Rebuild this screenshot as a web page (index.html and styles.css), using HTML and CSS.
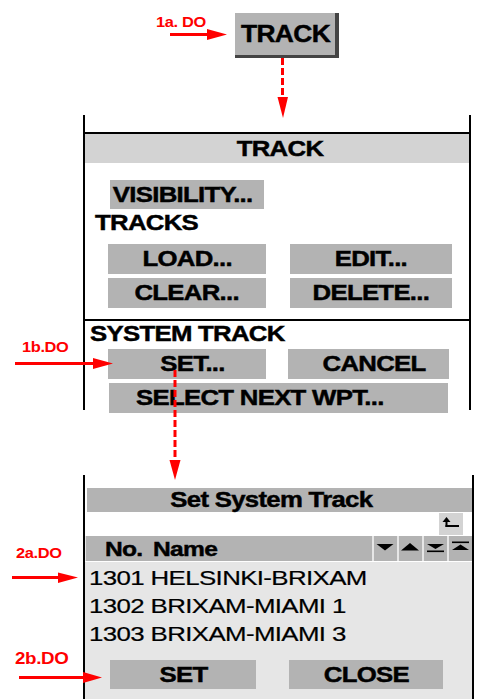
FILE: index.html
```html
<!DOCTYPE html>
<html>
<head>
<meta charset="utf-8">
<link rel="stylesheet" href="styles.css">
</head>
<body>
<div class="page">
  <div class="top">
    <div class="track-btn"><span class="t">TRACK</span></div>
  </div>

  <section class="panel p1">
    <div class="p1-head"><span class="t">TRACK</span></div>
    <div class="btn vis"><span class="t">VISIBILITY...</span></div>
    <div class="label lbl-tracks"><span class="t tl">TRACKS</span></div>
    <div class="btn-grid g1">
      <div class="btn"><span class="t">LOAD...</span></div>
      <div class="btn"><span class="t">EDIT...</span></div>
    </div>
    <div class="btn-grid g2">
      <div class="btn"><span class="t">CLEAR...</span></div>
      <div class="btn"><span class="t">DELETE...</span></div>
    </div>
    <div class="sep"></div>
    <div class="label lbl-sys"><span class="t tl">SYSTEM TRACK</span></div>
    <div class="btn-grid g3">
      <div class="btn shift"><span class="t">SET...</span></div>
      <div class="btn shift"><span class="t">CANCEL</span></div>
    </div>
    <div class="btn sel"><span class="t">SELECT NEXT WPT...</span></div>
  </section>

  <section class="panel p2">
    <div class="p2-title"><span class="t">Set System Track</span></div>
    <div class="toolbar">
      <div class="icon-btn">
        <svg width="24" height="22" viewBox="0 0 24 22">
          <polygon points="3.5,9 7.5,4 11.5,9" fill="#000"/>
          <rect x="6.5" y="8" width="2" height="6" fill="#000"/>
          <rect x="6.5" y="12" width="13.5" height="2" fill="#000"/>
        </svg>
      </div>
    </div>
    <div class="thead">
      <div class="th-main"><span class="t tl">No.</span><span class="t tl nm">Name</span></div>
      <div class="th-sort">
        <svg width="23" height="25" viewBox="0 0 23 25"><polygon points="2.5,8 19.5,8 11,14.5" fill="#000"/></svg>
      </div>
      <div class="th-sort">
        <svg width="23" height="25" viewBox="0 0 23 25"><polygon points="2,14.5 20,14.5 11,7" fill="#000"/></svg>
      </div>
      <div class="th-sort">
        <svg width="23" height="25" viewBox="0 0 23 25"><polygon points="3,8 20,8 11.5,13" fill="#000"/><rect x="3" y="14.5" width="17" height="1.6" fill="#000"/></svg>
      </div>
      <div class="th-sort">
        <svg width="23" height="25" viewBox="0 0 23 25"><rect x="3" y="5.5" width="17" height="1.6" fill="#000"/><polygon points="3,14 20,14 11.5,8.5" fill="#000"/></svg>
      </div>
    </div>
    <div class="list">
      <div class="row"><span class="t tl rt">1301 HELSINKI-BRIXAM</span></div>
      <div class="row"><span class="t tl rt">1302 BRIXAM-MIAMI 1</span></div>
      <div class="row"><span class="t tl rt">1303 BRIXAM-MIAMI 3</span></div>
      <div class="actions">
        <div class="btn"><span class="t">SET</span></div>
        <div class="btn"><span class="t">CLOSE</span></div>
      </div>
    </div>
  </section>

  <svg class="annot" width="477" height="699" viewBox="0 0 477 699">
    <g fill="#ff0000" stroke="none">
      <polygon points="207,29 227,34.5 207,40"/>
      <polygon points="93,358 113,363.5 93,369"/>
      <polygon points="58,572.5 78,577.5 58,583"/>
      <polygon points="83,672 102,677.5 83,683"/>
      <polygon points="277.5,97 288,97 283,118"/>
      <polygon points="169.5,460 180.5,460 175,480"/>
    </g>
    <g stroke="#ff0000" stroke-width="3" fill="none">
      <line x1="170" y1="34.5" x2="210" y2="34.5"/>
      <line x1="15" y1="363.5" x2="96" y2="363.5"/>
      <line x1="12" y1="577.5" x2="60" y2="577.5"/>
      <line x1="19" y1="677.5" x2="86" y2="677.5"/>
      <line x1="282.5" y1="58" x2="282.5" y2="99" stroke-dasharray="7 3"/>
      <line x1="175" y1="370" x2="175" y2="462" stroke-dasharray="7 3"/>
    </g>
  </svg>

  <span class="note n1a"><span class="t tl">1a. DO</span></span>
  <span class="note n1b"><span class="t tl">1b.DO</span></span>
  <span class="note n2a"><span class="t tl">2a.DO</span></span>
  <span class="note n2b"><span class="t tl">2b.DO</span></span>
</div>
</body>
</html>
```

FILE: styles.css
```css
* {
  box-sizing: border-box;
}

body {
  margin: 0;
  background: #ffffff;
  font-family: "Liberation Sans", Arial, Helvetica, sans-serif;
  color: #000000;
}

.page {
  position: relative;
  width: 477px;
  height: 699px;
  overflow: hidden;
}

.t {
  display: inline-block;
  white-space: nowrap;
  transform: scaleX(1.17);
  transform-origin: center;
  letter-spacing: -0.6px;
}

.tl {
  transform-origin: left center;
}

.track-btn,
.p1-head,
.btn,
.label,
.p2-title,
.th-main {
  -webkit-text-stroke: 0.45px #000000;
}

/* top TRACK button */
.top {
  height: 115px;
  padding-top: 13px;
  padding-left: 235px;
}

.track-btn {
  width: 104px;
  height: 45px;
  background: #b3b3b3;
  border-right: 4px solid #444444;
  border-bottom: 3px solid #444444;
  display: flex;
  align-items: center;
  justify-content: center;
  font-weight: bold;
  font-size: 24px;
}

.track-btn .t {
  transform: scaleX(1.1);
}

/* panels */
.panel {
  margin-left: 83px;
  border-left: 2px solid #000000;
  border-right: 2px solid #000000;
}

.p1 {
  width: 388px;
  height: 295px;
  padding-top: 17px;
}

.p1-head {
  height: 31px;
  border-top: 2px solid #000000;
  background: #d3d3d3;
  display: flex;
  align-items: center;
  justify-content: center;
  padding-left: 6px;
  font-weight: bold;
  font-size: 22px;
}

.btn {
  height: 30px;
  background: #b3b3b3;
  display: flex;
  align-items: center;
  justify-content: center;
  font-weight: bold;
  font-size: 22px;
}

.vis {
  margin-top: 17px;
  margin-left: 25px;
  width: 154px;
  height: 29px;
  padding-right: 8px;
}

.label {
  font-weight: bold;
  font-size: 22px;
  line-height: 22px;
  height: 22px;
}

.lbl-tracks {
  margin-top: 3px;
  padding-left: 10px;
}

.lbl-sys {
  margin-top: 2px;
  padding-left: 5px;
}

.btn-grid {
  display: grid;
  margin-left: 23px;
}

.g1,
.g2 {
  grid-template-columns: 158px 162px;
  column-gap: 24px;
}

.g1 {
  margin-top: 10px;
}

.g2 {
  margin-top: 4px;
}

.g3 {
  margin-top: 4px;
  grid-template-columns: 158px 161px;
  column-gap: 22px;
}

.shift {
  padding-left: 12px;
}

.sep {
  margin-top: 11px;
  border-top: 2px solid #000000;
}

.sel {
  margin-top: 4px;
  margin-left: 24px;
  width: 339px;
  padding-right: 38px;
}

/* second panel */
.p2 {
  margin-top: 65px;
  width: 391px;
  height: 230px;
  padding-top: 13px;
  display: flex;
  flex-direction: column;
}

.p2-title {
  margin-left: 2px;
  height: 24px;
  background: #b3b3b3;
  display: flex;
  align-items: center;
  justify-content: center;
  padding-right: 16px;
  font-weight: bold;
  font-size: 22px;
}

.toolbar {
  height: 23px;
  display: flex;
  justify-content: flex-end;
  padding-right: 9px;
}

.icon-btn {
  margin-top: 1px;
  width: 24px;
  height: 22px;
  background: #d3d3d3;
}

.icon-btn svg,
.th-sort svg {
  display: block;
}

.thead {
  margin-top: 1px;
  height: 25px;
  display: flex;
  gap: 2px;
  padding-left: 1px;
  background: #e6e6e6;
}

.th-main {
  flex: 1;
  background: #b3b3b3;
  display: flex;
  align-items: center;
  padding-left: 19px;
  font-weight: bold;
  font-size: 21px;
}

.th-main .nm {
  margin-left: 16px;
}

.th-sort {
  width: 23px;
  background: #b3b3b3;
}

.list {
  flex: 1;
  margin-top: 1px;
  background: #e6e6e6;
  padding-top: 2px;
  padding-left: 4px;
}

.row {
  height: 28px;
  line-height: 28px;
  font-size: 21px;
  -webkit-text-stroke: 0.2px #000000;
}

.rt {
  transform: scaleX(1.23);
  letter-spacing: -0.5px;
}

.actions {
  margin-top: 12px;
  margin-left: 21px;
  display: grid;
  grid-template-columns: 146px 154px;
  column-gap: 33px;
}

.actions .btn {
  height: 29px;
}

/* annotations */
.annot {
  position: absolute;
  left: 0;
  top: 0;
  pointer-events: none;
}

.note {
  position: absolute;
  color: #ff0000;
  font-weight: bold;
  font-size: 14px;
  line-height: 14px;
}

.note .t {
  letter-spacing: -0.3px;
}

.n1a {
  left: 156px;
  top: 15px;
}

.n1b {
  left: 22px;
  top: 340px;
}

.n2a {
  left: 16px;
  top: 546px;
}

.n2b {
  left: 15px;
  top: 651px;
  font-size: 16px;
  line-height: 16px;
}
```
